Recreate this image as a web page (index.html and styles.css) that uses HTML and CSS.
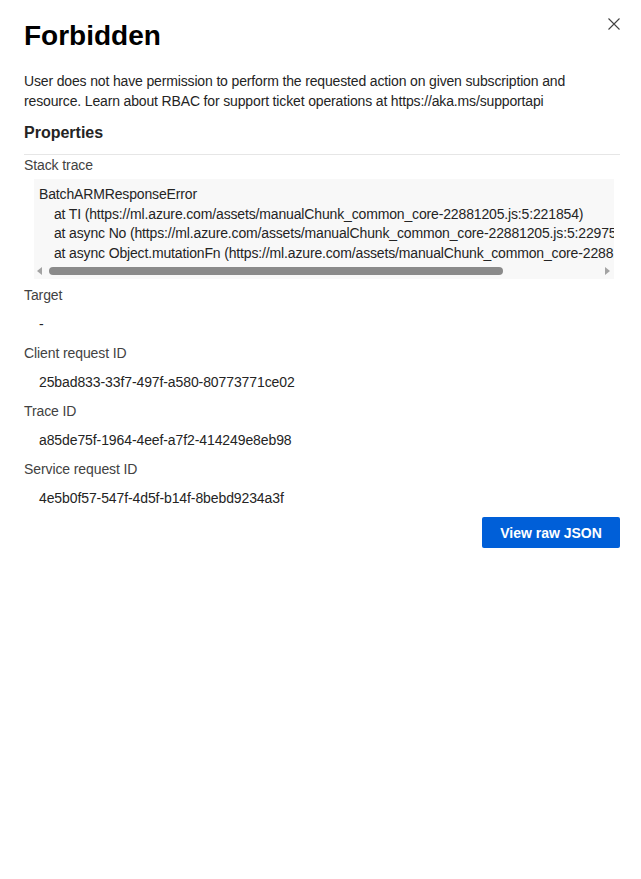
FILE: index.html
```html
<!DOCTYPE html>
<html lang="en">
<head>
    <meta charset="UTF-8">
    <title>Forbidden</title>
    <link rel="stylesheet" href="styles.css">
</head>
<body>
    <div class="panel">
        <div class="header">
            <h1>Forbidden</h1>
            <button class="close" aria-label="Close">
                <svg width="12" height="12" viewBox="0 0 12 12">
                    <path d="M0.5 0.5 L11.5 11.5 M11.5 0.5 L0.5 11.5" stroke="#424242" stroke-width="1.1" fill="none"/>
                </svg>
            </button>
        </div>

        <p class="description">User does not have permission to perform the requested action on given subscription and resource. Learn about RBAC for support ticket operations at https://aka.ms/supportapi</p>

        <h2>Properties</h2>

        <div class="props">
            <div class="prop">
                <div class="label">Stack trace</div>
                <div class="trace">
                    <pre class="trace-text">BatchARMResponseError
    at TI (https://ml.azure.com/assets/manualChunk_common_core-22881205.js:5:221854)
    at async No (https://ml.azure.com/assets/manualChunk_common_core-22881205.js:5:229751)
    at async Object.mutationFn (https://ml.azure.com/assets/manualChunk_common_core-22881205.js:5:230112)</pre>
                    <div class="scrollbar">
                        <span class="arrow left"></span>
                        <div class="track"><div class="thumb"></div></div>
                        <span class="arrow right"></span>
                    </div>
                </div>
            </div>

            <div class="prop">
                <div class="label">Target</div>
                <div class="value">-</div>
            </div>

            <div class="prop">
                <div class="label">Client request ID</div>
                <div class="value">25bad833-33f7-497f-a580-80773771ce02</div>
            </div>

            <div class="prop">
                <div class="label">Trace ID</div>
                <div class="value">a85de75f-1964-4eef-a7f2-414249e8eb98</div>
            </div>

            <div class="prop">
                <div class="label">Service request ID</div>
                <div class="value">4e5b0f57-547f-4d5f-b14f-8bebd9234a3f</div>
            </div>
        </div>

        <div class="actions">
            <button class="primary">View raw JSON</button>
        </div>
    </div>
</body>
</html>
```

FILE: styles.css
```css
* {
    margin: 0;
    padding: 0;
    box-sizing: border-box;
}

body {
    font-family: "Liberation Sans", Arial, sans-serif;
    font-size: 14px;
    line-height: 20px;
    color: #242424;
    background: #fff;
}

.panel {
    width: 641px;
    padding: 18px 21px 0 24px;
}

.header {
    display: flex;
    justify-content: space-between;
    align-items: flex-start;
}

h1 {
    font-size: 28px;
    line-height: 36px;
    font-weight: 700;
    color: #000;
}

.close {
    background: none;
    border: none;
    margin-top: 0;
    margin-right: 0;
    width: 12px;
    height: 12px;
    display: flex;
}

.description {
    margin-top: 17px;
    letter-spacing: -0.15px;
}

h2 {
    margin-top: 11px;
    font-size: 16px;
    line-height: 22px;
    font-weight: 700;
    padding-bottom: 10px;
    border-bottom: 1px solid #e6e6e6;
}

.props {
    display: flex;
    flex-direction: column;
}

.prop {
    margin-bottom: 9px;
}

.prop:first-child {
    margin-bottom: 6px;
}

.label {
    color: #424242;
    letter-spacing: -0.1px;
}

.value {
    margin-top: 9px;
    padding-left: 15px;
    letter-spacing: -0.1px;
}

.trace {
    margin: 4px 6px 0 10px;
    background: #f8f8f8;
    overflow: hidden;
}

.trace-text {
    font-family: "Liberation Sans", Arial, sans-serif;
    font-size: 14px;
    line-height: 19.5px;
    padding: 6px 0 0 5px;
    white-space: pre;
    overflow: hidden;
    letter-spacing: -0.15px;
    color: #242424;
}

.scrollbar {
    height: 16px;
    display: flex;
    align-items: center;
    padding: 0 4px 0 3px;
}

.arrow {
    width: 0;
    height: 0;
    border-top: 4px solid transparent;
    border-bottom: 4px solid transparent;
}

.arrow.left {
    border-right: 5px solid #a3a3a3;
}

.arrow.right {
    border-left: 5px solid #a3a3a3;
}

.track {
    flex: 1;
    padding: 0 8px 0 7px;
}

.thumb {
    width: 454px;
    height: 8px;
    border-radius: 4px;
    background: #8a8a8a;
}

.actions {
    display: flex;
    justify-content: flex-end;
}

.primary {
    width: 138px;
    height: 31px;
    background: #005fd8;
    color: #fff;
    border: none;
    border-radius: 2px;
    font-family: "Liberation Sans", Arial, sans-serif;
    font-size: 14px;
    font-weight: 700;
}
```
